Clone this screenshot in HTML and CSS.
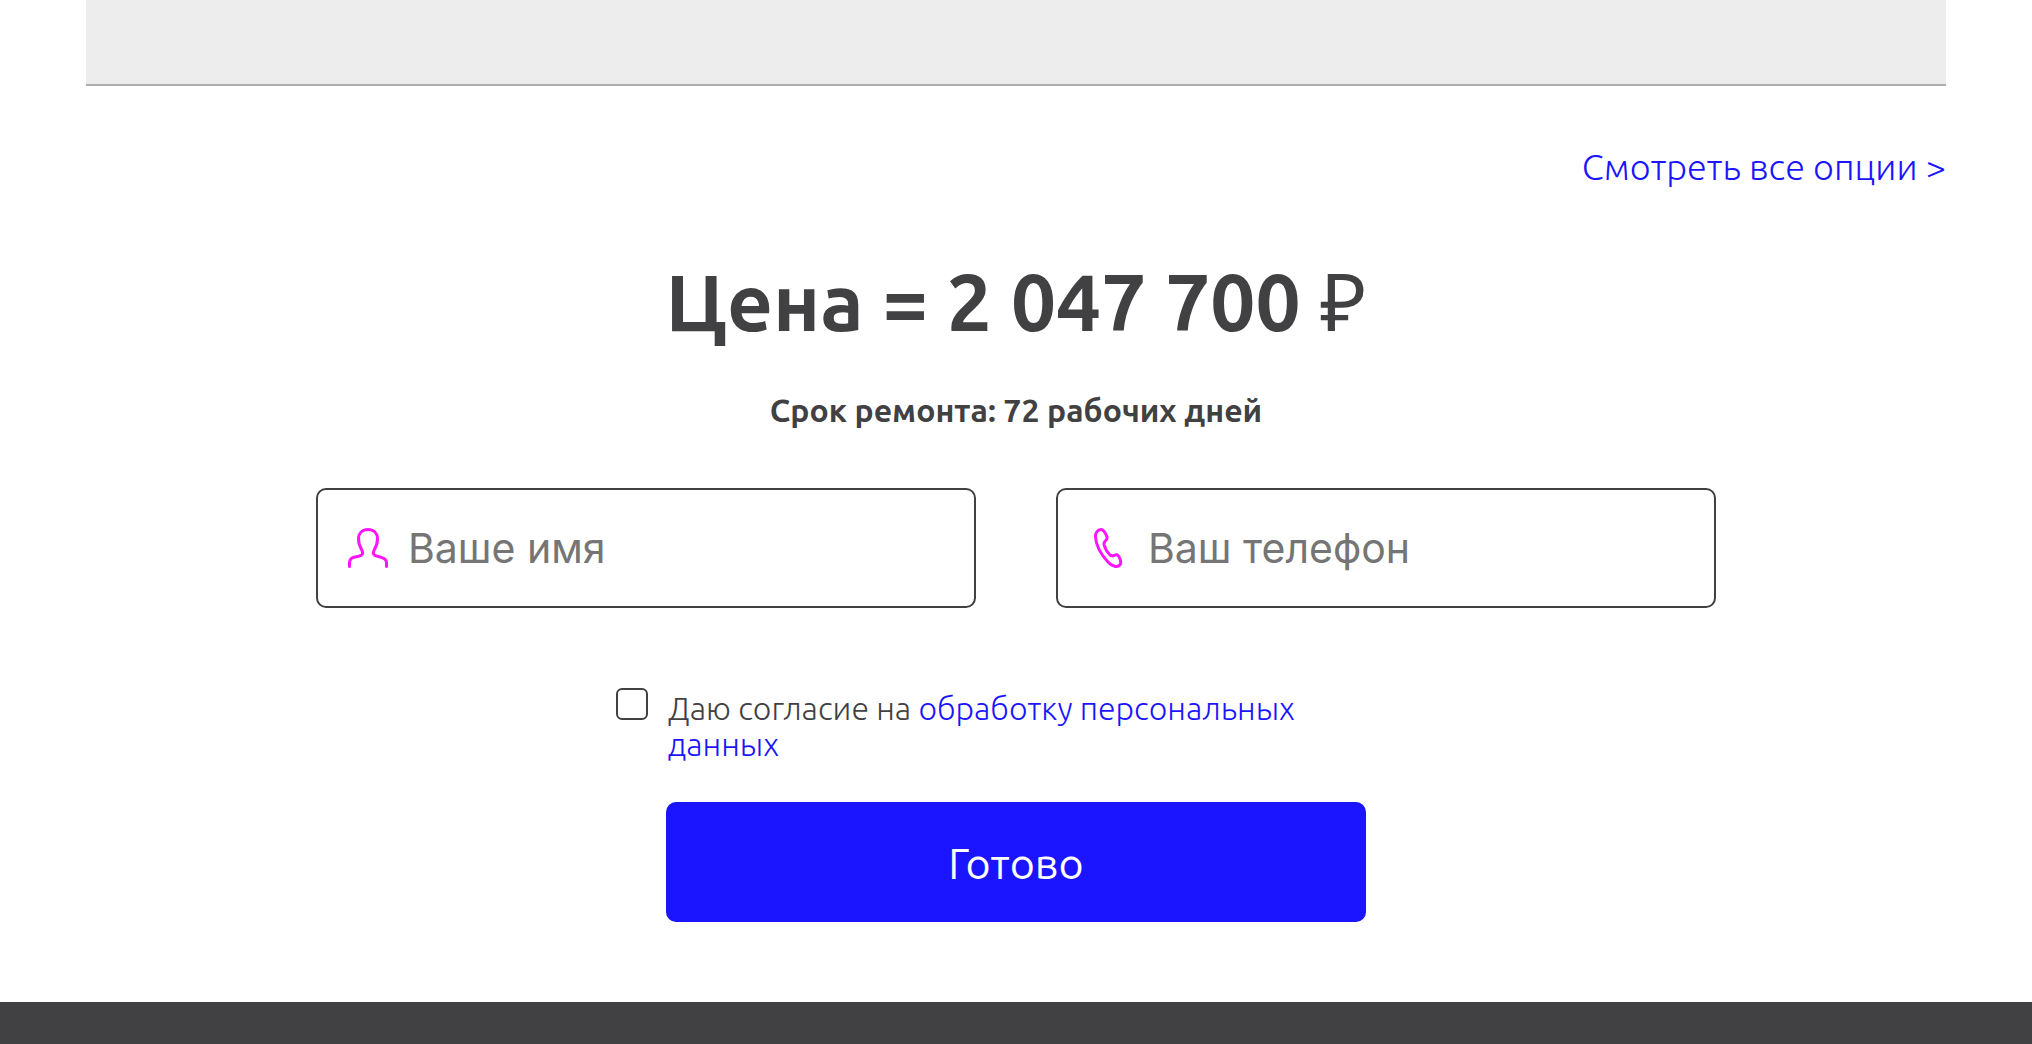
FILE: index.html
```
<!DOCTYPE html>
<html lang="ru">
<head>
    <meta charset="UTF-8">
    <meta name="viewport" content="width=device-width, initial-scale=1.0">
    <title>Цена ремонта</title>
    <link rel="stylesheet" href="styles.css">
</head>
<body>
    <main class="container">
        <div class="options-panel"></div>
        <a class="all-options" href="#">Смотреть все опции &gt;</a>

        <h2 class="price">Цена = 2 047 700 <span class="currency">₽</span></h2>
        <p class="term">Срок ремонта: 72 рабочих дней</p>

        <form class="order-form">
            <div class="fields">
                <label class="field">
                    <svg class="field-icon" viewBox="0 0 40 40" aria-hidden="true">
                        <path d="M1.500 38.500V35C1.500 31.500 3 30 6 29.300L10.500 28.300C14.500 27.300 15.500 25.500 14 22.500C12 19 10.500 15.500 10.500 11C10.500 5 14.500 1.500 20 1.500S29.500 5 29.500 11C29.500 15.500 28 19 26 22.500C24.500 25.500 25.500 27.300 29.500 28.300L34 29.600C37 30.500 38.500 32 38.500 35V38.500"/>
                    </svg>
                    <input type="text" name="name" placeholder="Ваше имя" aria-label="Ваше имя">
                </label>
                <label class="field">
                    <svg class="field-icon" viewBox="0 0 40 40" aria-hidden="true">
                        <path d="M13 1.500C16 1.500 17.500 5 19 9C20 12.500 15.500 12.500 16 16.500C17 20.500 19.500 24.500 22 27C25 29.500 26.500 25.800 29.500 27C31.500 28.500 33.500 33.500 32.300 36.500C29.500 40 24 38.500 20 34C13.500 27 8 17.500 7.500 9C7.300 5 9.500 1.500 13 1.500Z"/>
                    </svg>
                    <input type="tel" name="phone" placeholder="Ваш телефон" aria-label="Ваш телефон">
                </label>
            </div>

            <div class="agreement">
                <input type="checkbox" id="agree" name="agree">
                <label for="agree">Даю согласие на <a href="#">обработку персональных данных</a></label>
            </div>

            <button class="submit" type="submit">Готово</button>
        </form>
    </main>
    <footer class="footer"></footer>
</body>
</html>
```

FILE: styles.css
```
* {
    margin: 0;
    padding: 0;
    box-sizing: border-box;
}

body {
    display: flex;
    flex-direction: column;
    min-height: 100vh;
    background-color: #fff;
    color: #414042;
    font-family: Ubuntu, "Open Sans", "Noto Sans", sans-serif;
    font-weight: 300;
}

a {
    color: #1a14ff;
    text-decoration: none;
}

.container {
    display: flex;
    flex-direction: column;
    width: 100%;
    padding: 0 86px 80px;
}

.options-panel {
    height: 86px;
    background-color: #ededed;
    border-bottom: 2px solid #adadad;
}

.all-options {
    align-self: flex-end;
    margin-top: 59px;
    font-size: 36px;
    line-height: 44px;
}

.price {
    margin-top: 65px;
    font-size: 80px;
    font-weight: 600;
    line-height: 92px;
    text-align: center;
}

.currency {
    font-family: Lato, "Open Sans", sans-serif;
    font-weight: 400;
}

.term {
    margin-top: 45px;
    font-size: 32px;
    font-weight: 600;
    line-height: 36px;
    text-align: center;
}

.order-form {
    display: flex;
    flex-direction: column;
    align-items: center;
    margin-top: 60px;
}

.fields {
    display: grid;
    grid-template-columns: repeat(2, minmax(0, 1fr));
    gap: 80px;
    width: 100%;
    max-width: 1400px;
}

.field {
    display: flex;
    align-items: center;
    gap: 20px;
    height: 120px;
    padding: 0 30px;
    border: 2px solid #414042;
    border-radius: 10px;
}

.field-icon {
    flex: none;
    width: 40px;
    height: 40px;
    fill: none;
    stroke: #ff14ff;
    stroke-width: 3;
    stroke-linecap: round;
    stroke-linejoin: round;
}

.field input {
    flex: 1;
    min-width: 0;
    border: none;
    outline: none;
    background: none;
    color: #414042;
    font-family: Inter, sans-serif;
    font-size: 41px;
    font-weight: 400;
}

.field input::placeholder {
    color: #757575;
}

.agreement {
    display: flex;
    align-items: flex-start;
    gap: 20px;
    width: 100%;
    max-width: 800px;
    margin-top: 80px;
}

.agreement input {
    flex: none;
    appearance: none;
    width: 32px;
    height: 32px;
    border: 2px solid #414042;
    border-radius: 6px;
}

.agreement input:checked {
    background-color: #1a14ff;
}

.agreement label {
    max-width: 700px;
    padding-top: 2px;
    font-size: 32px;
    line-height: 36px;
}

.submit {
    width: 100%;
    max-width: 700px;
    height: 120px;
    margin-top: 40px;
    padding-top: 2px;
    border: none;
    border-radius: 10px;
    background-color: #1a14ff;
    color: #fff;
    font-family: inherit;
    font-size: 43px;
    font-weight: 400;
    cursor: pointer;
}

.footer {
    flex: 1;
    min-height: 42px;
    background-color: #414042;
}
```
